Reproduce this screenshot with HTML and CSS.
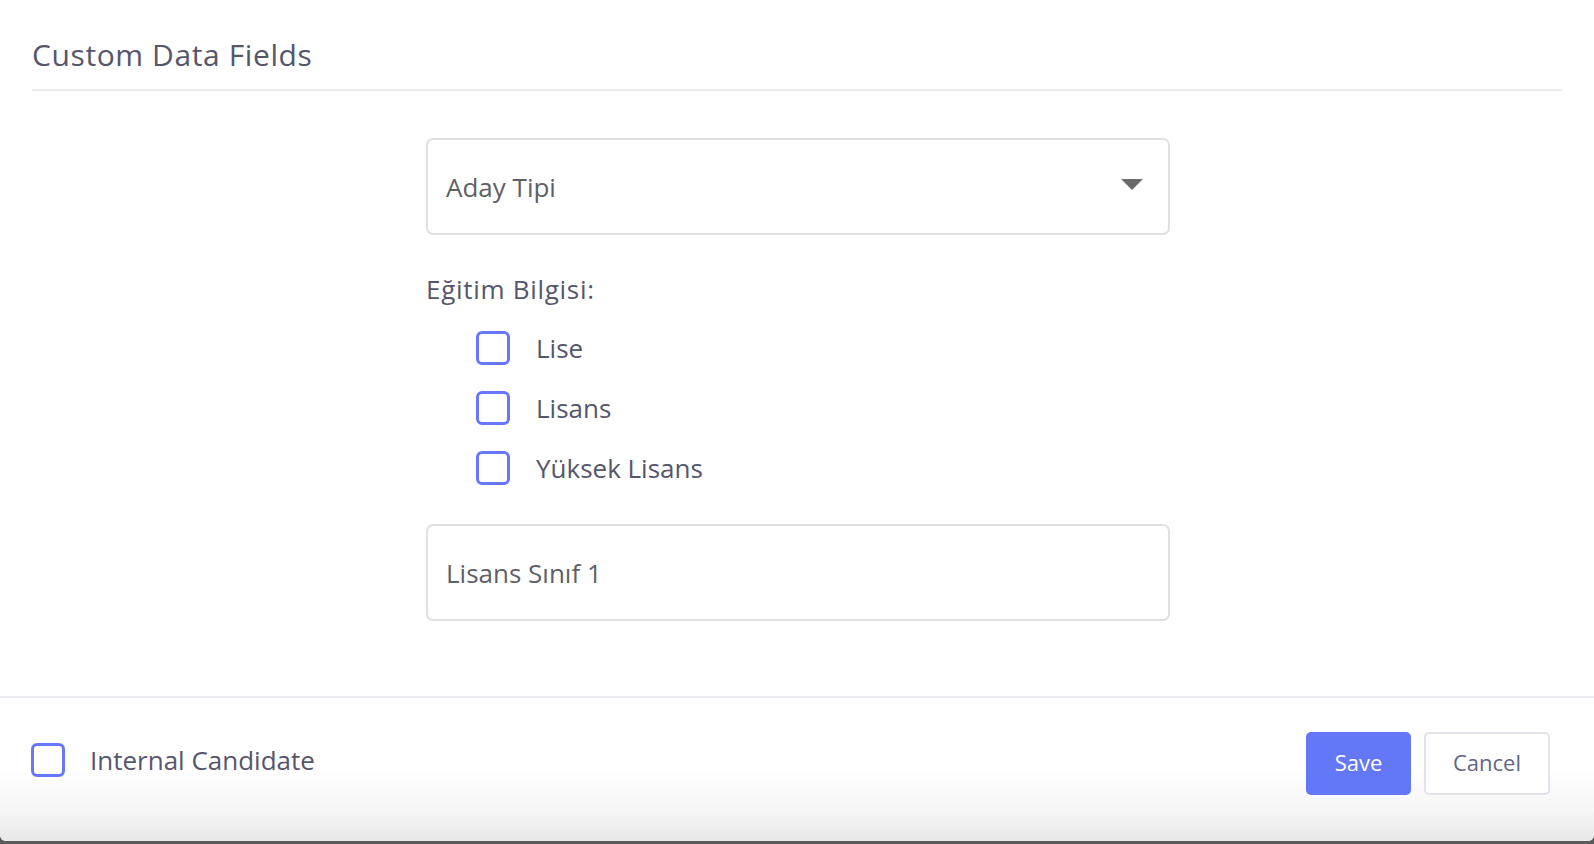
FILE: index.html
```html
<!DOCTYPE html>
<html lang="tr">
<head>
<meta charset="utf-8">
<title>Custom Data Fields</title>
<link rel="stylesheet" href="styles.css">
</head>
<body>
<div class="modal">
  <div class="header">
    <h2 class="title">Custom Data Fields</h2>
  </div>
  <div class="content">
    <div class="form">
      <div class="select">
        <span class="select-text">Aday Tipi</span>
        <span class="caret"></span>
      </div>
      <div class="group-label">Eğitim Bilgisi:</div>
      <div class="options">
        <label class="option"><span class="box"></span><span class="opt-text">Lise</span></label>
        <label class="option"><span class="box"></span><span class="opt-text">Lisans</span></label>
        <label class="option"><span class="box"></span><span class="opt-text">Yüksek Lisans</span></label>
      </div>
      <div class="input">
        <span class="input-text">Lisans Sınıf 1</span>
      </div>
    </div>
  </div>
  <div class="footer">
    <label class="internal"><span class="box"></span><span class="internal-text">Internal Candidate</span></label>
    <div class="actions">
      <button class="btn btn-save">Save</button>
      <button class="btn btn-cancel">Cancel</button>
    </div>
  </div>
</div>
</body>
</html>
```

FILE: styles.css
```css
* { box-sizing: border-box; }
html, body {
  margin: 0;
  padding: 0;
}
body {
  width: 1594px;
  height: 844px;
  overflow: hidden;
  background: #5b5b5b;
  font-family: "Open Sans", "Noto Sans", sans-serif;
  color: #55566b;
}
.modal {
  height: 841px;
  background: #ffffff;
  border-radius: 0 0 6px 6px;
  display: flex;
  flex-direction: column;
  overflow: hidden;
}
.header {
  margin: 0 32px;
  padding-top: 36px;
  padding-bottom: 15px;
  border-bottom: 2px solid #ebebf0;
}
.title {
  margin: 0;
  font-size: 30px;
  line-height: 38px;
  font-weight: 400;
  color: #55566a;
  letter-spacing: 0.6px;
}
.content {
  flex: 0 0 607px;
  display: flex;
  justify-content: center;
  border-bottom: 2px solid #ebebf0;
}
.form {
  width: 744px;
  margin-top: 47px;
  margin-left: 2px;
}
.select, .input {
  height: 97px;
  border: 2px solid #e0e0e2;
  border-radius: 7px;
  display: flex;
  align-items: center;
  padding: 0 25px 0 18px;
  font-size: 26px;
  color: #5f5f66;
}
.select { justify-content: space-between; }
.caret {
  width: 0;
  height: 0;
  border-left: 11px solid transparent;
  border-right: 11px solid transparent;
  border-top: 11px solid #6a6a6a;
  margin-top: -4px;
}
.group-label {
  margin-top: 38px;
  font-size: 26px;
  line-height: 32px;
  letter-spacing: 0.7px;
  color: #55566b;
}
.options {
  margin-top: 13px;
  padding-left: 50px;
  display: flex;
  flex-direction: column;
}
.option, .internal {
  display: flex;
  align-items: center;
  height: 60px;
}
.box {
  width: 34px;
  height: 34px;
  border: 3px solid #6677fc;
  border-radius: 6px;
  flex: 0 0 auto;
}
.opt-text {
  margin-left: 26px;
  font-size: 26px;
  color: #55566b;
}
.input {
  margin-top: 26px;
}
.footer {
  flex: 1;
  display: flex;
  align-items: center;
  justify-content: space-between;
  padding: 0 44px 0 31px;
  background: linear-gradient(to bottom, #ffffff 0%, #ffffff 50%, #f6f6f6 78%, #e8e8e8 100%);
}
.footer .internal {
  margin-top: -20px;
}
.internal-text {
  margin-left: 25px;
  font-size: 26px;
  color: #55566b;
}
.actions {
  display: flex;
  gap: 13px;
  margin-top: -12px;
}
.btn {
  height: 63px;
  border-radius: 5px;
  font-family: "Open Sans", "Noto Sans", sans-serif;
  font-size: 22px;
  line-height: 1;
  padding: 0 0 3px;
  cursor: pointer;
}
.btn-save {
  width: 105px;
  background: #6477f9;
  border: none;
  color: #ffffff;
}
.btn-cancel {
  width: 126px;
  background: #ffffff;
  border: 2px solid #e2e3ea;
  color: #5f6586;
}
```
